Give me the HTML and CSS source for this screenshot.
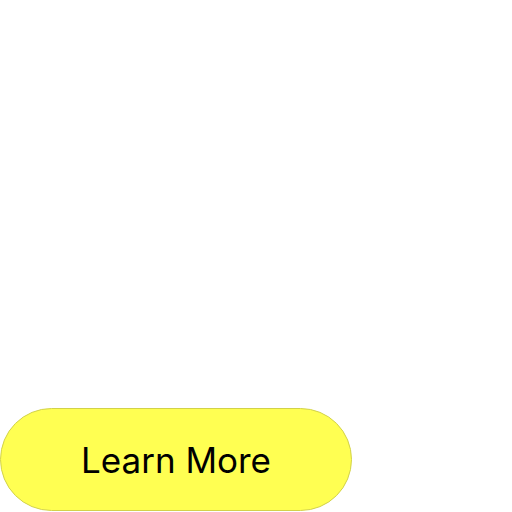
FILE: index.html
```html
<!DOCTYPE html>
<html>
<head>
<meta charset="utf-8">
<link rel="stylesheet" href="styles.css">
</head>
<body>
<main class="page">
  <button class="cta">Learn More</button>
</main>
</body>
</html>
```

FILE: styles.css
```css
html, body {
  margin: 0;
  padding: 0;
  background: #ffffff;
}
.page {
  height: 512px;
  display: flex;
  flex-direction: column;
  justify-content: flex-end;
  align-items: flex-start;
  padding-bottom: 1px;
  box-sizing: border-box;
}
.cta {
  width: 352px;
  height: 103px;
  border: 1px solid #d2d24a;
  border-radius: 52px;
  background: #ffff52;
  color: #000000;
  font-family: Inter, "Noto Sans", sans-serif;
  font-size: 35px;
  font-weight: 400;
  padding: 0;
  margin: 0;
}
```
